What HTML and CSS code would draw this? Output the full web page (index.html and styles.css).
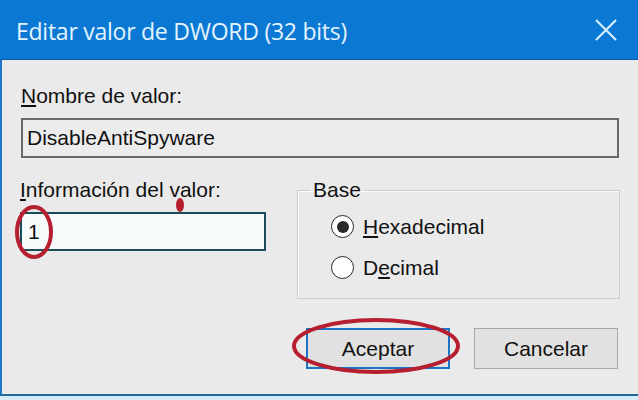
FILE: index.html
```html
<!DOCTYPE html>
<html lang="es">
<head>
<meta charset="utf-8">
<title>Editar valor de DWORD (32 bits)</title>
<link rel="stylesheet" href="styles.css">
</head>
<body>
<div class="dialog">
  <div class="titlebar">
    <span class="title">Editar valor de DWORD (32 bits)</span>
    <svg class="close" width="24" height="24" viewBox="0 0 24 24"><path d="M2 2 L22 22 M22 2 L2 22" stroke="#d4efff" stroke-width="2.2" fill="none"/></svg>
  </div>
  <div class="content">
    <div class="label"><u>N</u>ombre de valor:</div>
    <div class="field field-name">DisableAntiSpyware</div>
    <div class="row">
      <div class="col">
        <div class="label label2"><u>I</u>nformación del valor:</div>
        <div class="field field-data">1</div>
      </div>
      <fieldset class="group">
        <legend>Base</legend>
        <div class="radio"><span class="dot checked"></span><span><u>H</u>exadecimal</span></div>
        <div class="radio"><span class="dot"></span><span>D<u>e</u>cimal</span></div>
      </fieldset>
    </div>
    <div class="buttons">
      <div class="btn btn-default">Aceptar</div>
      <div class="btn">Cancelar</div>
    </div>
  </div>
</div>
<div class="under"></div>
<svg class="marks" width="638" height="400" viewBox="0 0 638 400">
  <ellipse cx="34" cy="232" rx="17" ry="25" fill="none" stroke="#b51f2f" stroke-width="4"/>
  <ellipse cx="180" cy="205" rx="4" ry="7" fill="#b51f2f"/>
  <ellipse cx="376" cy="346" rx="82" ry="26" fill="none" stroke="#b51f2f" stroke-width="4"/>
</svg>
</body>
</html>
```
FILE: styles.css
```css
html, body {
  margin: 0;
  padding: 0;
  width: 638px;
  height: 400px;
  overflow: hidden;
  background: #d6edf8;
}
.dialog {
  box-sizing: border-box;
  width: 638px;
  height: 396px;
  background: #eaeaea;
  border-left: 2px solid #1d76c6;
  border-bottom: 2px solid #24679a;
  font-family: "Liberation Sans", Arial, sans-serif;
  font-size: 21px;
  color: #111;
}
.titlebar {
  height: 60px;
  margin-left: -2px;
  background: #0b78d4;
  display: flex;
  align-items: center;
  justify-content: space-between;
  padding: 0 20px 0 16px;
  box-sizing: border-box;
  border-bottom: 1px solid #0a5fa8;
}
.title {
  font-family: "Open Sans", "Noto Sans", sans-serif;
  font-size: 23px;
  letter-spacing: -0.25px;
  color: #e3f4ff;
  line-height: 28px;
  margin-top: 3px;
}
.close { display: block; margin-top: 1px; }
.content {
  padding: 24px 18px 0 19px;
}
.label {
  line-height: 24px;
  height: 24px;
}
.field {
  box-sizing: border-box;
  height: 40px;
  line-height: 36px;
  padding-left: 4px;
  border: 2px solid #6a6a6a;
  margin-top: 10px;
}
.field-name {
  background: #ececec;
  margin-right: 1px;
}
.row {
  display: grid;
  grid-template-columns: 245px 1fr;
  column-gap: 31px;
  margin-top: 20px;
}
.col {
  margin-left: -1px;
}
.field-data {
  height: 39px;
  line-height: 35px;
  background: #f7fbfb;
  border-color: #1e4b5a;
  padding-left: 6px;
}
.group {
  margin: 0;
  padding: 4px 12px 10px 12px;
  border: 1px solid #cdcdcd;
  box-shadow: inset 1px 1px 0 #fafafa;
  min-width: 0;
}
.group legend {
  padding: 0 3px;
  line-height: 24px;
}
.radio {
  display: flex;
  align-items: center;
  height: 41px;
  margin-left: 21px;
  gap: 9px;
}
.dot {
  box-sizing: border-box;
  width: 23px;
  height: 23px;
  border-radius: 50%;
  border: 1.6px solid #2a2a2a;
  background: #fff;
  display: flex;
  align-items: center;
  justify-content: center;
}
.dot.checked::after {
  content: "";
  width: 12px;
  height: 12px;
  border-radius: 50%;
  background: #2a2a2a;
}
.buttons {
  display: flex;
  justify-content: flex-end;
  gap: 24px;
  margin-top: 29px;
  margin-right: 2px;
}
.btn {
  box-sizing: border-box;
  width: 144px;
  height: 41px;
  background: #e1e1e1;
  border: 1px solid #a8a8a8;
  display: flex;
  align-items: center;
  justify-content: center;
}
.btn-default {
  border: 2px solid #1a73c4;
}
.marks {
  position: absolute;
  left: 0;
  top: 0;
  pointer-events: none;
}
```
